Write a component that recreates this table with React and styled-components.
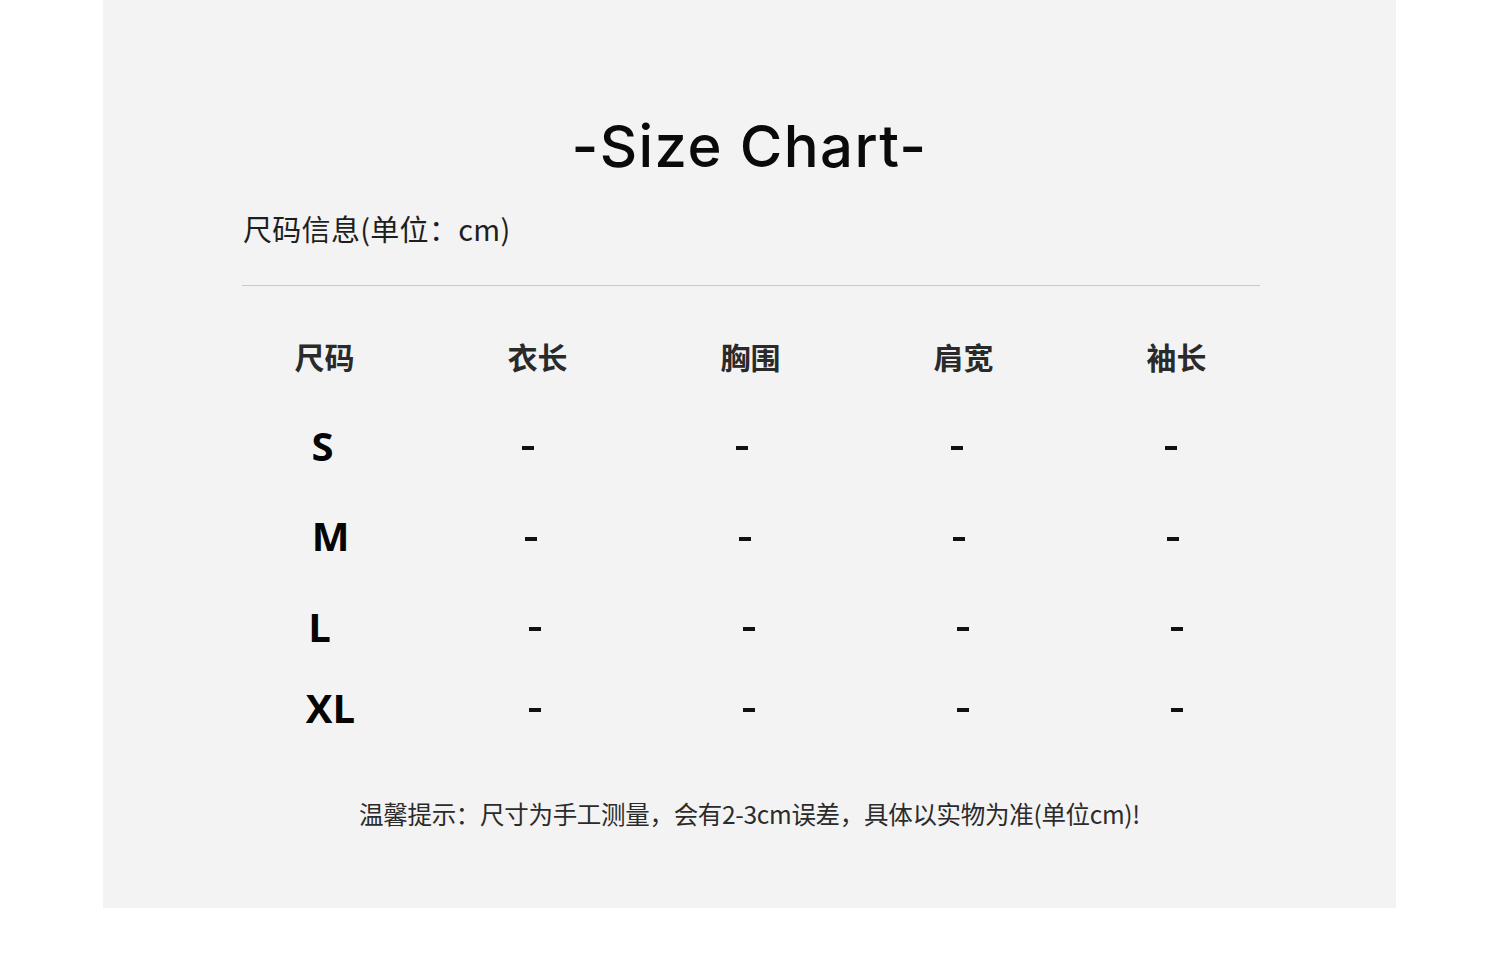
import React from 'react';
import styled, { createGlobalStyle } from 'styled-components';

const GlobalStyle = createGlobalStyle`
  html, body {
    margin: 0;
    padding: 0;
    background: #ffffff;
  }
`;

const cjk = `"Noto Sans CJK SC", "Noto Sans", sans-serif`;

// grey sheet holding the chart
const Sheet = styled.div`
  width: 1293px;
  height: 908px;
  margin-left: 103px;
  background: #f3f3f3;
  box-sizing: border-box;
  padding-top: 107px;
  display: flex;
  flex-direction: column;
`;

const Title = styled.h1`
  margin: 0;
  text-align: center;
  font-family: "Inter", "Lato", sans-serif;
  font-weight: 550;
  font-size: 58px;
  line-height: 78px;
  color: #0a0a0a;
  letter-spacing: 1.4px;
`;

const Caption = styled.div`
  margin: 23px 0 0 140px;
  font-family: ${cjk};
  font-size: 29px;
  line-height: 40px;
  color: #1e1e1e;
  letter-spacing: 0.3px;
`;

const Rule = styled.hr`
  margin: 37px 0 0 139px;
  width: 1018px;
  border: none;
  border-top: 1px solid #c9c9c9;
`;

const Table = styled.div`
  margin: 50px 0 0 115px;
  display: grid;
  grid-template-columns: repeat(5, 213px);
`;

const HeadCell = styled.div`
  height: 40px;
  display: flex;
  align-items: center;
  justify-content: center;
  font-family: ${cjk};
  font-weight: 700;
  font-size: 30px;
  color: #2a2a2a;
`;

const Row = styled.div`
  grid-column: 1 / -1;
  display: grid;
  grid-template-columns: repeat(5, 213px);
  height: ${p => p.$h}px;
  align-items: center;
`;

const SizeCell = styled.div`
  text-align: center;
  font-family: "Open Sans", "Liberation Sans", sans-serif;
  font-weight: 700;
  font-size: 40px;
  color: #050505;
  transform: translateX(${p => p.$dx}px);
`;

const Dash = styled.div`
  display: flex;
  justify-content: center;
  transform: translate(${p => p.$dx}px, 3px);
  &::before {
    content: '';
    width: 12px;
    height: 4px;
    background: #111;
  }
`;

const Note = styled.p`
  margin: 53px 0 0;
  text-align: center;
  font-family: ${cjk};
  font-size: 24.5px;
  color: #2b2b2b;
  letter-spacing: -0.3px;
`;

const heads = ['尺码', '衣长', '胸围', '肩宽', '袖长'];

const rows = [
  { size: 'S', h: 90, dx: -2, off: [-10, -9, -7, -6] },
  { size: 'M', h: 91, dx: 6, off: [-7, -6, -5, -4] },
  { size: 'L', h: 90, dx: -5, off: [-3, -2, -1, 0] },
  { size: 'XL', h: 72, dx: 6, off: [-3, -2, -1, 0] },
];

const App = () => (
  <>
    <GlobalStyle />
    <Sheet>
      <Title>-Size Chart-</Title>
      <Caption>尺码信息(单位：cm)</Caption>
      <Rule />
      <Table>
        {heads.map(h => (
          <HeadCell key={h}>{h}</HeadCell>
        ))}
        <Row $h={24} />
        {rows.map(r => (
          <Row key={r.size} $h={r.h}>
            <SizeCell $dx={r.dx}>{r.size}</SizeCell>
            {r.off.map((o, i) => (
              <Dash key={i} $dx={o} />
            ))}
          </Row>
        ))}
      </Table>
      <Note>温馨提示：尺寸为手工测量，会有2-3cm误差，具体以实物为准(单位cm)!</Note>
    </Sheet>
  </>
);

export default App;
